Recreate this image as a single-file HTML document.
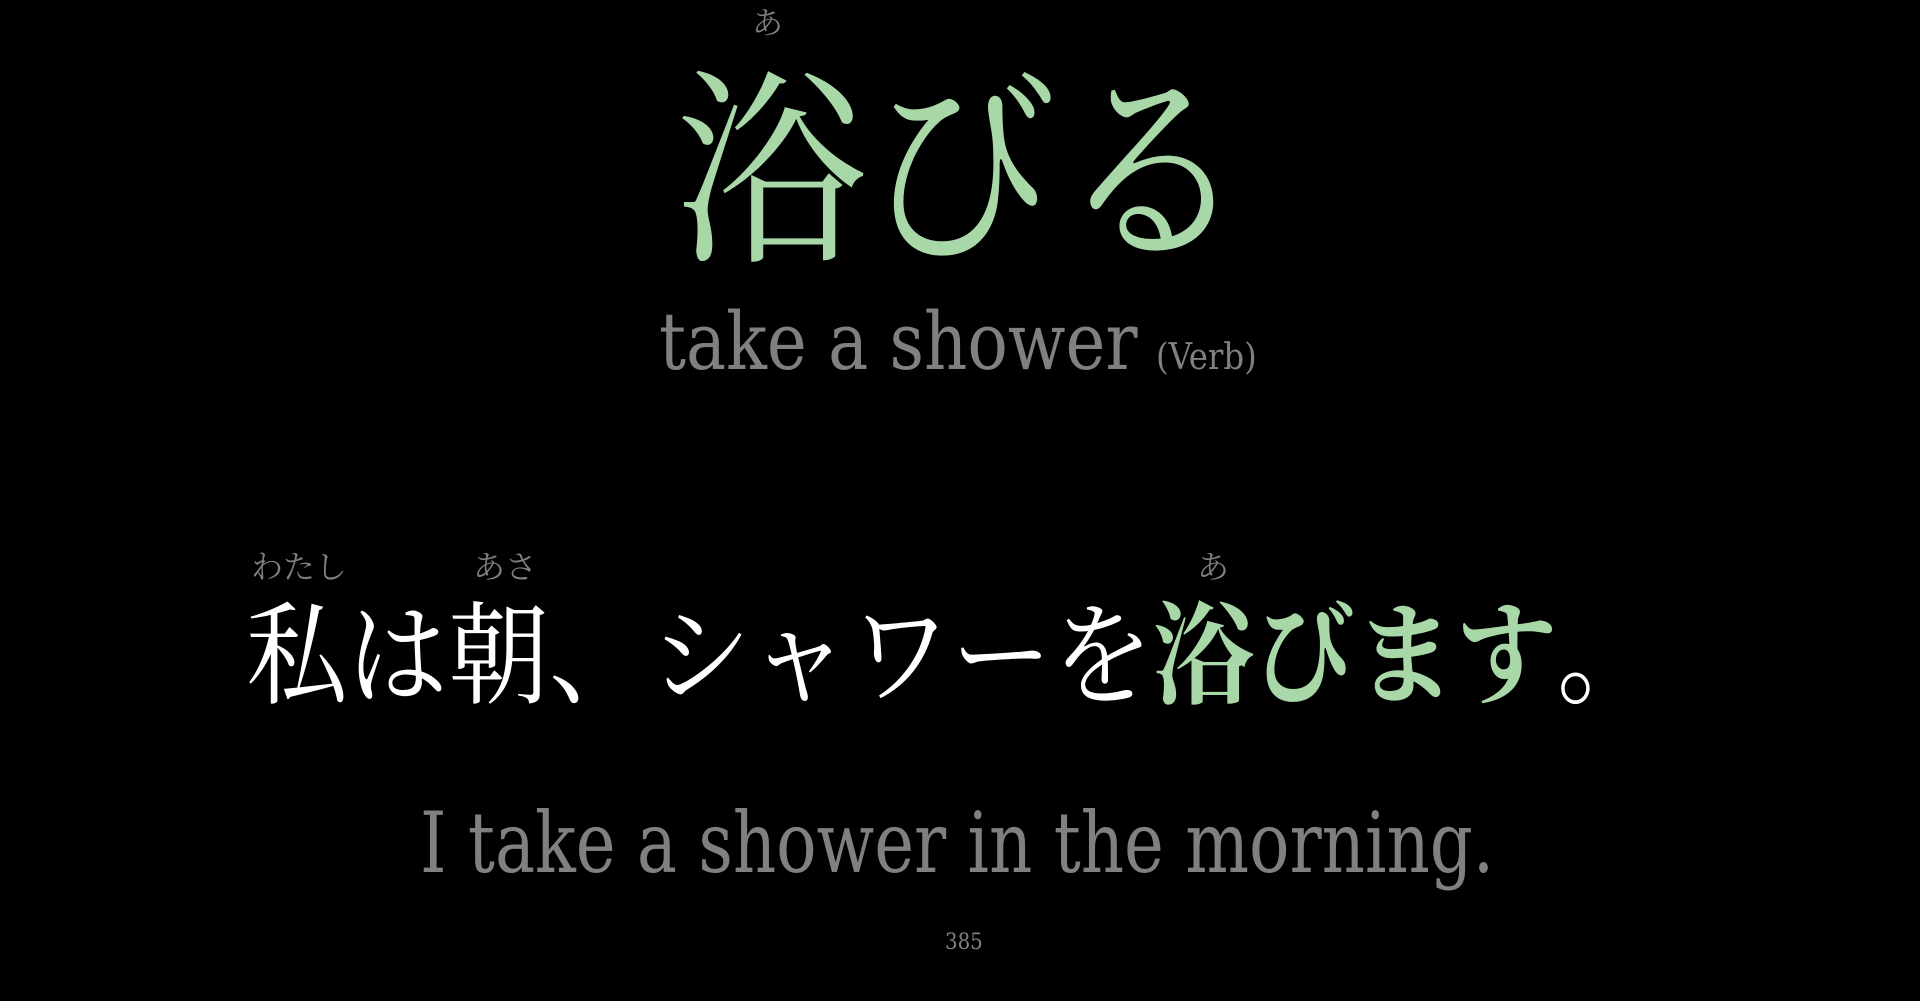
<!DOCTYPE html>
<html><head><meta charset="utf-8"><style>
html,body{margin:0;padding:0;background:#000;width:1920px;height:1001px;overflow:hidden;position:relative}
.a{position:absolute;white-space:nowrap;line-height:1;transform-origin:0 0}
.jp{font-family:"Liberation Serif","Noto Serif CJK JP",serif}
.en{font-family:"DejaVu Serif","Liberation Serif",serif;font-stretch:condensed;color:#808080}
.g{color:#a8d8a8}
.r{color:#808080;font-size:32px}
</style></head><body>
<div class="a jp r" style="left:752px;top:8px;font-size:31px">あ</div>
<div class="a jp g" style="left:675px;top:70px;font-size:191px;transform:scaleY(1.1)">浴びる</div>
<div class="a en" style="left:659px;top:302px;font-size:80px;transform:scaleX(0.935)">take a shower</div>
<div class="a en" style="left:1156px;top:340px;font-size:36px">(Verb)</div>

<div class="a jp r" style="left:251px;top:551px">わたし</div>
<div class="a jp r" style="left:473px;top:551px">あさ</div>
<div class="a jp r" style="left:1197px;top:551px">あ</div>
<div class="a jp" style="left:246px;top:602px;font-size:101px;color:#fff;transform:scaleY(1.1)">私は朝、シャワーを<span class="g" style="font-weight:700">浴びます</span>。</div>

<div class="a en" style="left:420px;top:801px;font-size:84px;transform:scaleX(0.89)">I take a shower in the morning.</div>
<div class="a en" style="left:945px;top:932px;font-size:22px">385</div>
</body></html>
